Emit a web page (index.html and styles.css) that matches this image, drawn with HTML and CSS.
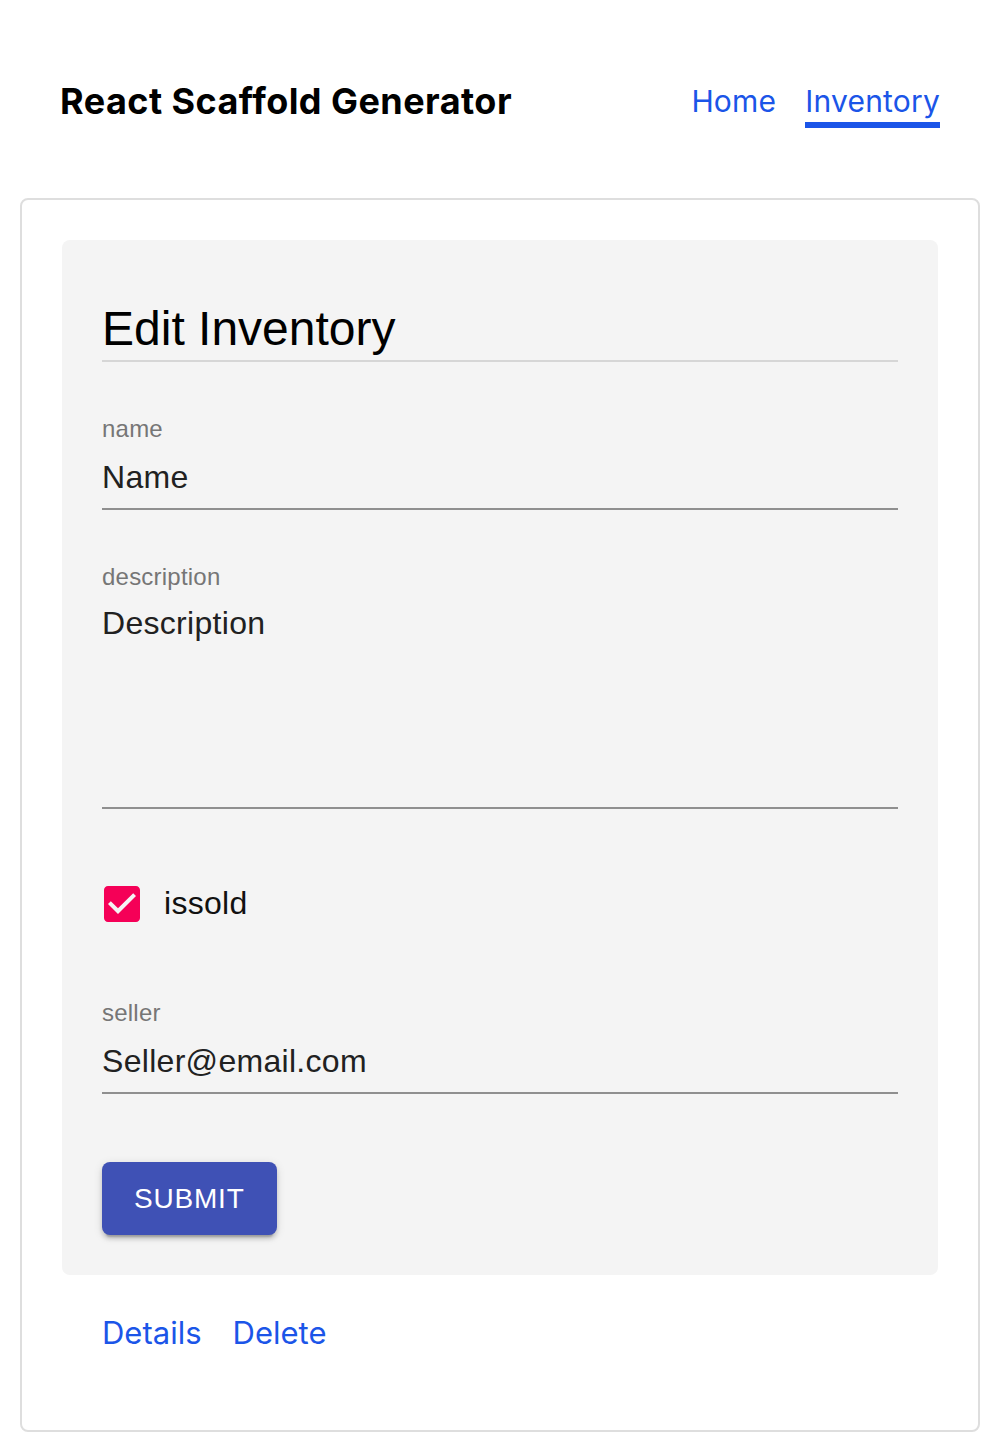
FILE: index.html
```html
<!DOCTYPE html>
<html lang="en">
<head>
<meta charset="utf-8">
<title>React Scaffold Generator</title>
<link rel="stylesheet" href="styles.css">
</head>
<body>
<header class="topbar">
  <div class="brand">React Scaffold Generator</div>
  <nav class="nav">
    <a class="nav-link" href="#">Home</a>
    <a class="nav-link active" href="#">Inventory</a>
  </nav>
</header>
<main class="card">
  <form class="panel">
    <h1 class="heading">Edit Inventory</h1>
    <div class="field">
      <div class="label">name</div>
      <div class="input">Name</div>
    </div>
    <div class="field field-multi">
      <div class="label">description</div>
      <div class="input textarea">Description</div>
    </div>
    <label class="check-row">
      <span class="check-root">
        <svg class="check-icon" viewBox="0 0 24 24" width="48" height="48"><path fill="#f50057" d="M19 3H5c-1.11 0-2 .9-2 2v14c0 1.1.89 2 2 2h14c1.11 0 2-.9 2-2V5c0-1.1-.89-2-2-2zm-9 14l-5-5 1.410-1.41L10 14.17l7.59-7.59L19 8l-9 9z"/></svg>
      </span>
      <span class="check-label">issold</span>
    </label>
    <div class="field">
      <div class="label">seller</div>
      <div class="input">Seller@email.com</div>
    </div>
    <button class="submit" type="button">Submit</button>
  </form>
  <div class="links">
    <a class="link" href="#">Details</a>
    <a class="link" href="#">Delete</a>
  </div>
</main>
</body>
</html>
```
FILE: styles.css
```css
* { box-sizing: border-box; }
html, body { margin: 0; padding: 0; background: #fff; }
body { font-family: "Liberation Sans", Arial, sans-serif; color: #000; }

.topbar {
  display: flex;
  justify-content: space-between;
  align-items: flex-start;
  padding: 79px 60px 0 60px;
}
.brand {
  font-family: Inter, "Noto Sans", sans-serif;
  font-weight: 700;
  font-size: 36px;
  line-height: 44px;
  letter-spacing: 0.45px;
  color: #000;
}
.nav { display: flex; gap: 29px; margin-top: 2px; }
.nav-link {
  font-family: Inter, "Noto Sans", sans-serif;
  font-size: 30px;
  line-height: 40px;
  letter-spacing: 0.2px;
  color: #1b55e8;
  text-decoration: none;
  padding-bottom: 1px;
  border-bottom: 6px solid transparent;
}
.nav-link.active { border-bottom-color: #1b55e8; }

.card {
  margin: 70px 20px 0 20px;
  border: 2px solid #dedede;
  border-radius: 8px;
  padding: 40px 40px 77px 40px;
}
.panel {
  background: #f4f4f4;
  border-radius: 8px;
  padding: 40px;
  margin: 0;
}
.heading {
  margin: 0;
  font-weight: 400;
  font-size: 48px;
  line-height: 57.6px;
  padding: 20px 0 2px 0;
  border-bottom: 2px solid #d6d6d6;
  color: #000;
}
.field { margin-top: 55px; }
.label {
  font-size: 24px;
  line-height: 24px;
  letter-spacing: 0.22px;
  color: #767676;
}
.input {
  margin-top: 17px;
  font-size: 32px;
  line-height: 38px;
  letter-spacing: 0.3px;
  padding-bottom: 12px;
  border-bottom: 2px solid #8f8f8f;
  color: #212121;
}
.textarea {
  margin-top: 15px;
  min-height: 205px;
  padding-bottom: 13px;
}
.check-row {
  display: flex;
  align-items: center;
  margin: 53px 0 0 -22px;
  height: 84px;
}
.check-root { display: flex; padding: 18px; }
.check-icon { display: block; }
.check-label {
  font-size: 32px;
  line-height: 38px;
  letter-spacing: 0.3px;
  color: #111;
  margin-bottom: 2px;
}
.submit {
  display: block;
  margin-top: 68px;
  background: #3f51b5;
  color: #fff;
  border: 0;
  border-radius: 8px;
  font-family: "Liberation Sans", Arial, sans-serif;
  font-size: 28px;
  line-height: 49px;
  letter-spacing: 0.8px;
  text-transform: uppercase;
  padding: 12px 32px;
  box-shadow: 0 6px 2px -4px rgba(0,0,0,.2), 0 4px 4px 0 rgba(0,0,0,.14), 0 2px 10px 0 rgba(0,0,0,.12);
}
.links {
  display: flex;
  gap: 31px;
  margin-top: 38px;
  padding-left: 40px;
}
.link {
  font-family: Inter, "Noto Sans", sans-serif;
  font-size: 31px;
  line-height: 40px;
  color: #1b55e8;
  text-decoration: none;
}
```
